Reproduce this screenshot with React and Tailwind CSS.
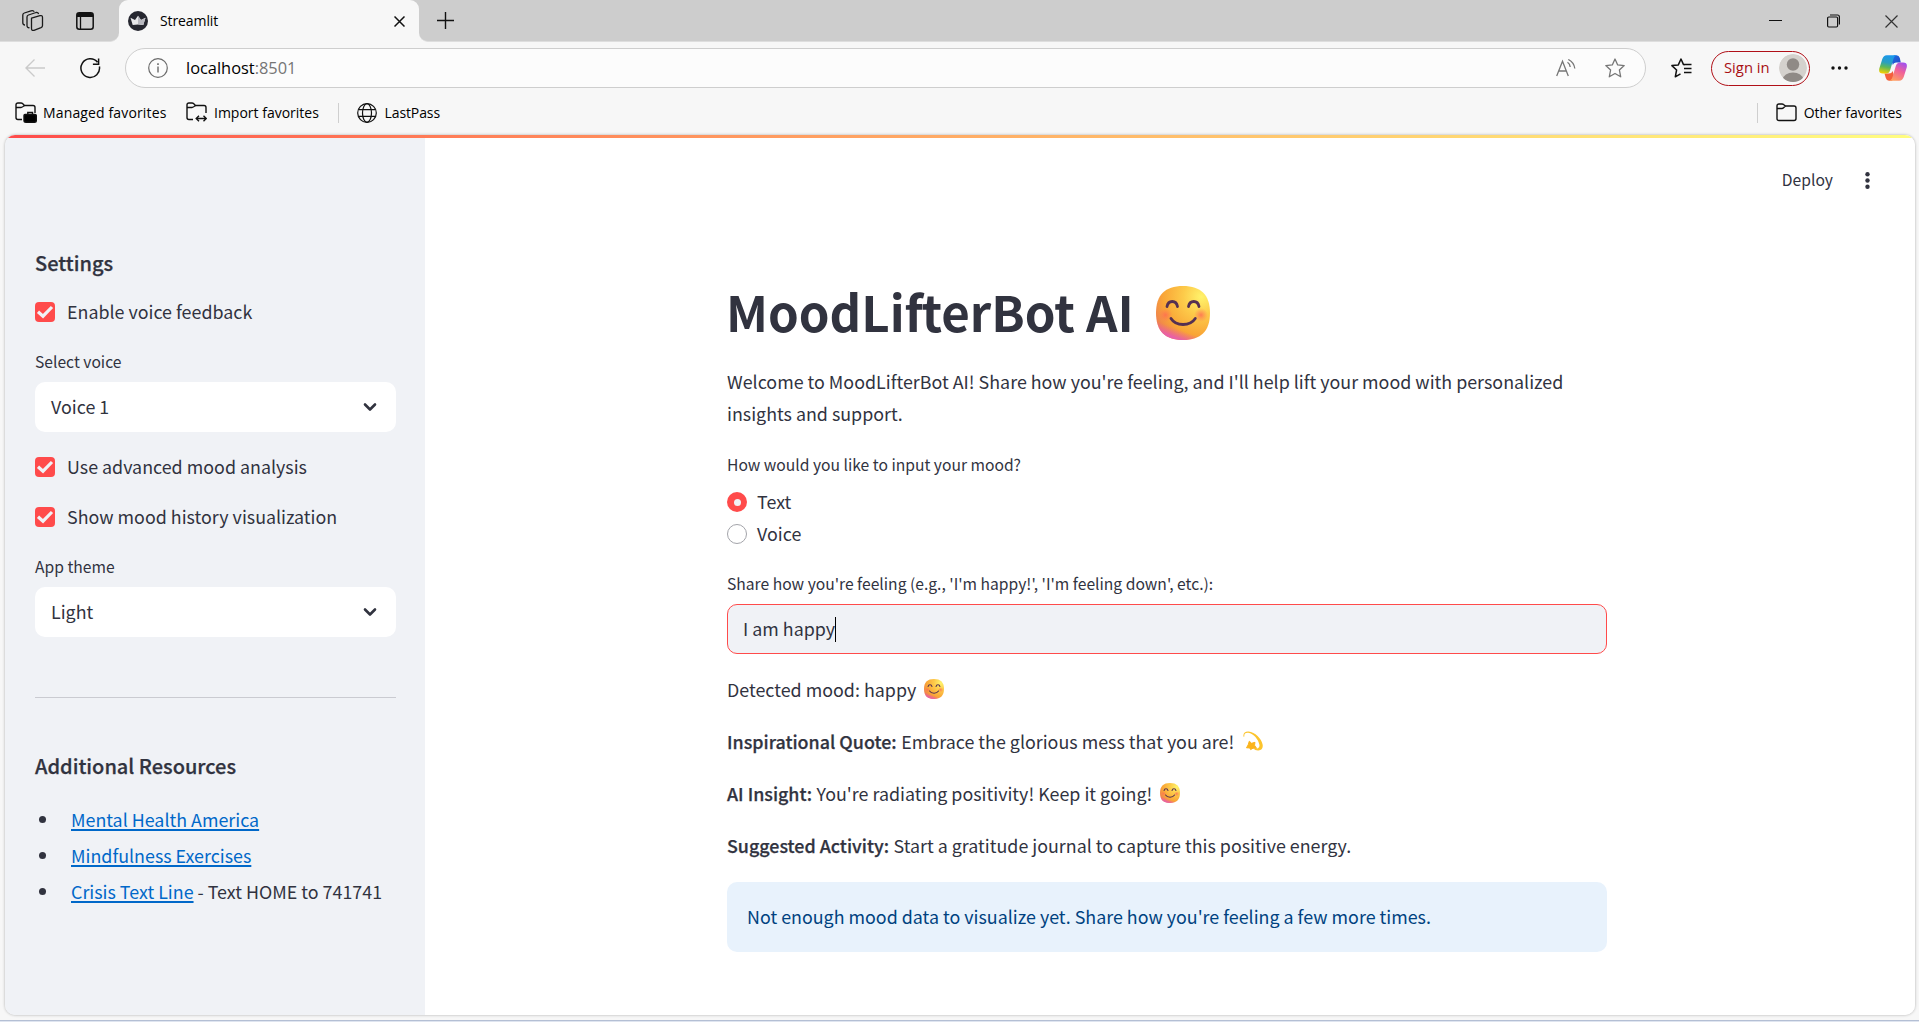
const SANS = "font-['Noto_Sans_CJK_SC','Noto_Sans',sans-serif]";

function Smile({ size, id, className = "" }) {
  return (
    <svg width={size} height={size} viewBox="0 0 54 54" className={className}>
      <defs>
        <radialGradient id={id + "a"} cx="0.84" cy="0.2" r="0.95">
          <stop offset="0" stopColor="#fff36c" />
          <stop offset="0.35" stopColor="#fdcb4a" />
          <stop offset="0.75" stopColor="#f9a536" />
          <stop offset="1" stopColor="#ee8050" />
        </radialGradient>
        <linearGradient id={id + "b"} x1="0.52" y1="0.84" x2="0.46" y2="1">
          <stop offset="0" stopColor="#f0609a" stopOpacity="0" />
          <stop offset="1" stopColor="#e860a8" />
        </linearGradient>
        <radialGradient id={id + "c"}>
          <stop offset="0" stopColor="#ff6a55" stopOpacity="0.8" />
          <stop offset="1" stopColor="#ff7a55" stopOpacity="0" />
        </radialGradient>
      </defs>
      <path d="M27 0C45 0 54 9 54 27S45 54 27 54 0 45 0 27 9 0 27 0Z" fill={`url(#${id}a)`} />
      <path d="M27 0C45 0 54 9 54 27S45 54 27 54 0 45 0 27 9 0 27 0Z" fill={`url(#${id}b)`} />
      <circle cx="9.5" cy="29" r="7" fill={`url(#${id}c)`} />
      <circle cx="45" cy="29" r="7" fill={`url(#${id}c)`} />
      <g fill="none" stroke="#553052" strokeWidth="2.8" strokeLinecap="round">
        <path d="M11 20.5C12.2 13.8 20.3 13.8 21.5 20.5" />
        <path d="M32.5 20.5C33.7 13.8 41.8 13.8 43 20.5" />
        <path d="M15 32.5C20 40.5 34 40.5 39.3 32.5" />
      </g>
    </svg>
  );
}

function Dizzy({ className = "" }) {
  return (
    <svg width="20" height="20" viewBox="0 0 20 20" className={className}>
      <path d="M.6 5.800C-.3 2.500 2 .3 5.500 .5C12 1 18.500 7.500 19.600 13.500C20.300 17.500 18.500 19.600 15 19.400C12.500 19.300 11 18.700 11.500 18C14.500 18.200 16.700 17 16.500 14C15.500 8.500 10.500 2.600 5.300 1.800C2.500 1.400 1 2.800 1.300 5.700Z" fill="#fcc42c" />
      <path d="M6.300 10.200L8.600 12.300L12 11.300L11.500 14.200L13.600 17.400L10 17.200L7.600 18.600L6.700 16.900L3.500 16.800L5.200 13.800Z" fill="#fbb41c" stroke="#fbb41c" strokeLinejoin="round" />
    </svg>
  );
}

function Check({ children }) {
  return (
    <label className="flex h-8 items-center gap-3 text-[17.880px] leading-8">
      <span className="flex size-5 items-center justify-center rounded-[4px] bg-[#ff4b4b]">
        <svg width="18" height="14" viewBox="0 0 18 14" fill="none" stroke="#f0f2f6" strokeWidth="3.200">
          <path d="M2 6.700L7 11.200L16 2" />
        </svg>
      </span>
      <span className="mb-0.5 whitespace-nowrap">{children}</span>
    </label>
  );
}

function Select({ label, value, className = "" }) {
  return (
    <div className={className}>
      <div className="h-[33px] text-[15.650px] leading-[26px]">{label}</div>
      <div className="flex h-[50px] items-center justify-between rounded-[10px] bg-white pr-[19px] pl-4 text-[17.880px]">
        <span className="mb-0.5">{value}</span>
        <svg width="14" height="10" viewBox="0 0 14 10" fill="none" stroke="#31333f" strokeWidth="2.600" strokeLinecap="round" strokeLinejoin="round">
          <path d="M2 2.500L7 7.500L12 2.500" />
        </svg>
      </div>
    </div>
  );
}

function TabStrip() {
  return (
    <div className="flex h-[42px] bg-[#cdcdcd]">
      <div className="flex flex-1 bg-[#f7f7f7]">
        <div className="flex w-[119px] items-center rounded-br-[9px] border-b border-[#dedede] bg-[#cdcdcd] pl-[22px]">
          <svg width="22" height="22" viewBox="0 0 22 22" fill="none" stroke="#1b1b1b" strokeWidth="1.300" strokeLinejoin="round">
            <path d="M9.500 8.200L18 5.700Q20.500 5 20.500 7.500V15.500Q20.500 17 19 17.700L12 20.300Q9.500 21 9.500 18.500V8.200Z" />
            <path d="M7.500 17.700Q5 18 5 15.500V7Q5 5.500 6.500 5L14 2.500Q16 2 16.600 4" />
            <path d="M3 15Q.8 15 .8 12.500V5Q.8 3.600 2.300 3L9 .9Q11.500 .2 12.200 1.800" />
          </svg>
          <svg width="18" height="18" viewBox="0 0 18 18" className="ml-[32px]">
            <rect x=".8" y=".8" width="16.400" height="16.400" rx="2.500" fill="none" stroke="#111" strokeWidth="1.500" />
            <path d="M1 5V3Q1 1 3 1H15Q17 1 17 3V5Z" fill="#111" />
            <path d="M4.500 5V17" stroke="#111" strokeWidth="1.300" />
          </svg>
        </div>
        <div className="w-[300px] bg-[#cdcdcd]">
          <div className="flex h-full items-center rounded-t-[9px] bg-[#f7f7f7] pl-[9px]">
            <svg width="20" height="20" viewBox="0 0 20 20">
              <circle cx="10" cy="10" r="10" fill="#262730" />
              <path d="M2.500 6.800L7 9L10 4.800L13 9L17.500 6.800L15.300 14Q10 13 4.700 14Z" fill="#e8e8ea" />
              <path d="M10 4.800L13 9L17.500 6.800L15.300 14Q12 13.200 10 13.300Z" fill="#b9b9c0" />
            </svg>
            <span className="mb-0.5 ml-3 text-[14px] tracking-[-0.1px]">Streamlit</span>
            <svg width="11" height="11" viewBox="0 0 11 11" className="mt-px mr-[14px] ml-auto" stroke="#111" strokeWidth="1.500">
              <path d="M.5 .5L10.500 10.500M10.500 .5L.5 10.500" />
            </svg>
          </div>
        </div>
        <div className="flex flex-1 items-center rounded-bl-[9px] border-b border-[#dedede] bg-[#cdcdcd] pl-[18px]">
          <svg width="17" height="17" viewBox="0 0 17 17" stroke="#111" strokeWidth="1.400">
            <path d="M8.500 0V17M0 8.500H17" />
          </svg>
          <svg width="13" height="1" viewBox="0 0 13 1" className="ml-auto"><path d="M0 .5H13" stroke="#111" strokeWidth="1" /></svg>
          <svg width="13" height="14" viewBox="0 0 13 14" className="ml-[45px]" fill="none" stroke="#111" strokeWidth="1.200">
            <rect x=".6" y="3" width="10" height="10" rx="1.200" />
            <path d="M3 1H10.500Q12.400 1 12.400 3V10.500" />
          </svg>
          <svg width="13" height="13" viewBox="0 0 13 13" className="mt-px mr-[21px] ml-[45px]" stroke="#333" strokeWidth="1.200">
            <path d="M.5 .5L12.500 12.500M12.500 .5L.5 12.500" />
          </svg>
        </div>
      </div>
    </div>
  );
}

function Copilot() {
  return (
    <svg width="28" height="26" viewBox="0 0 28 26">
      <defs>
        <linearGradient id="cpA" x1="0.5" y1="0" x2="0.3" y2="1">
          <stop offset="0" stopColor="#1a98ee" />
          <stop offset="0.4" stopColor="#2a9fc0" />
          <stop offset="0.65" stopColor="#5cb85a" />
          <stop offset="1" stopColor="#f5d000" />
        </linearGradient>
        <linearGradient id="cpB" x1="0.8" y1="0" x2="0.3" y2="1">
          <stop offset="0" stopColor="#a050f0" />
          <stop offset="0.45" stopColor="#f0609a" />
          <stop offset="1" stopColor="#ffa060" />
        </linearGradient>
        <linearGradient id="cpC" x1="0" y1="0" x2="1" y2="1">
          <stop offset="0" stopColor="#1a70e0" />
          <stop offset="1" stopColor="#2848c8" />
        </linearGradient>
      </defs>
      <path d="M15 .2H17.500Q20 .2 20.800 3L21.800 7.500H17Q14.500 7.500 13.800 10L12 4Z" fill="url(#cpC)" />
      <path d="M13 25.700H10Q7.500 25.700 6.800 23L5.500 18.500H10Q12.800 18.500 13.600 16L15.500 22Z" fill="#f4603c" />
      <path d="M7.800 .2H18Q15.500 .5 14.500 3.800L11.200 15Q10.200 18.500 7 18.500H4Q-.8 18.500 .3 13.500L3.300 4Q4.500 .2 7.800 .2Z" fill="url(#cpA)" />
      <path d="M20.200 25.700H10Q12.500 25.400 13.500 22L16.800 11Q17.800 7.500 21 7.500H24Q28.800 7.500 27.700 12.500L24.700 22Q23.500 25.700 20.200 25.700Z" fill="url(#cpB)" />
    </svg>
  );
}

function AddressRow() {
  return (
    <div className="flex h-[52px] items-center">
      <svg width="20" height="18" viewBox="0 0 20 18" className="ml-[25px]" fill="none" stroke="#cacaca" strokeWidth="1.400">
        <path d="M20 9H1M9.500 .6L1 9L9.500 17.400" />
      </svg>
      <svg width="21" height="21" viewBox="0 0 21 21" className="ml-[35px]" fill="none" stroke="#111" strokeWidth="1.500">
        <path d="M19.400 8.500A9.300 9.300 0 1 1 17.500 4.300M18.600 .5V6.200H12.900" />
      </svg>
      <div className="ml-[24px] flex h-10 w-[1521px] items-center rounded-full border border-[#cecece] bg-[#fcfcfc] pr-[20px] pl-[22px]">
        <svg width="20" height="20" viewBox="0 0 20 20" fill="none" stroke="#6b6b6b" strokeWidth="1.200">
          <circle cx="10" cy="10" r="9.300" />
          <path d="M10 8.500V14.500" strokeWidth="1.400" /><path d="M10 5.300V7" strokeWidth="1.600" />
        </svg>
        <span className="ml-[18px] text-[16.400px] leading-[38px] text-black">localhost<span className="text-[#757575]">:8501</span></span>
        <svg width="20" height="18" viewBox="0 0 20 18" className="ml-auto" fill="none" stroke="#767676" strokeWidth="1.300">
          <path d="M.7 17L6.500 2.300L12.300 17M2.800 12H10.200" />
          <path d="M11.500 3.200Q14 4.800 14.200 8M12.300 .5Q18 3.300 18.800 9.500" />
        </svg>
        <svg width="20" height="20" viewBox="0 0 20 20" className="ml-[29px]" fill="none" stroke="#767676" strokeWidth="1.300" strokeLinejoin="round">
          <path d="M10 1L12.700 6.900L19.200 7.600L14.400 12L15.700 18.800L10 15.500L4.300 18.800L5.600 12L.8 7.600L7.300 6.900Z" />
        </svg>
      </div>
      <svg width="21" height="20" viewBox="0 0 21 20" className="ml-[25px]" fill="none" stroke="#111" strokeWidth="1.500" strokeLinejoin="round">
        <path d="M13.500 6.700L12.500 6.600L10 1L7.300 6.900L.9 7.600L5.600 12L4.300 18.800L9.500 15.800" />
        <path d="M13 6.500H20.500M13 10.500H20.500M13 14.500H20.500" />
      </svg>
      <div className="ml-[19px] flex h-[35px] w-[99px] items-center rounded-full border-[1.500px] border-[#b01018] pl-[12px]">
        <span className="mb-px w-[55px] text-[14.800px] whitespace-nowrap text-[#a80f14]">Sign in</span>
        <svg width="28" height="28" viewBox="0 0 28 28">
          <defs><clipPath id="av"><circle cx="14" cy="14" r="14" /></clipPath></defs>
          <g clipPath="url(#av)">
            <circle cx="14" cy="14" r="14" fill="#d4d1cd" />
            <circle cx="14" cy="10.500" r="6.200" fill="#8f8a86" />
            <ellipse cx="14" cy="25" rx="10" ry="6.500" fill="#8f8a86" />
          </g>
        </svg>
      </div>
      <svg width="17" height="4" viewBox="0 0 17 4" className="ml-[21px]" fill="#111">
        <circle cx="2" cy="2" r="1.700" /><circle cx="8.500" cy="2" r="1.700" /><circle cx="15" cy="2" r="1.700" />
      </svg>
      <div className="ml-[31px]"><Copilot /></div>
    </div>
  );
}

const FOLDER = "M20 11V5.500Q20 3.500 18 3.500H9.500L7.500 1.500Q7 1 6 1H3Q1 1 1 3V15.500Q1 17.500 3 17.500H7";

function Bookmarks() {
  return (
    <div className="flex h-[41px] items-center pb-1 text-[14px]">
      <svg width="22" height="21" viewBox="0 0 22 21" className="ml-[15px]" fill="none" stroke="#111" strokeWidth="1.400">
        <path d={FOLDER} /><path d="M1 5.500H6Q7 5.500 9.500 3.500" />
        <path d="M10 12.500Q9 12.500 9 13.500V18.500Q9 20.300 11 20.300H19.500Q21.300 20.300 21.300 18.500V13.500Q21.300 12.500 20 12.500Z" fill="#000" />
        <path d="M12.800 12.500V10.500H17.500V12.500" />
      </svg>
      <span className="ml-[6px] w-[123px] tracking-[0.140px] whitespace-nowrap">Managed favorites</span>
      <svg width="21" height="21" viewBox="0 0 21 21" className="ml-[20px]" fill="none" stroke="#111" strokeWidth="1.400">
        <path d={FOLDER} /><path d="M1 5.500H6Q7 5.500 9.500 3.500" />
        <path d="M10.500 16.500H20M13 13.700L10.200 16.500L13 19.300M17.500 13.700L20.300 16.500L17.500 19.300" />
      </svg>
      <span className="ml-[7px] w-[106px] whitespace-nowrap">Import favorites</span>
      <span className="ml-[18px] h-5 w-px bg-[#cfcfcf]" />
      <svg width="20" height="20" viewBox="0 0 20 20" className="ml-[18px]" fill="none" stroke="#111" strokeWidth="1.200">
        <circle cx="10" cy="10" r="9.300" /><ellipse cx="10" cy="10" rx="4.500" ry="9.300" /><path d="M1.500 6.700H18.500M1.500 13.300H18.500" />
      </svg>
      <span className="ml-[7.500px] tracking-[-0.1px]">LastPass</span>
      <span className="ml-auto h-5 w-px bg-[#cfcfcf]" />
      <svg width="21" height="19" viewBox="0 0 21 19" className="ml-[18px]" fill="none" stroke="#111" strokeWidth="1.400">
        <path d="M1 3Q1 1 3 1H6Q7 1 7.500 1.500L9.500 3H18Q20 3 20 5V15.500Q20 17.500 18 17.500H3Q1 17.500 1 15.500ZM1 5.500H6Q7 5.500 9.500 3" />
      </svg>
      <span className="mr-[17px] ml-[7px] whitespace-nowrap">Other favorites</span>
    </div>
  );
}

function Sidebar() {
  const link = "text-[#0068c9] underline decoration-[1.500px] underline-offset-[2px]";
  const heading = "h-[30px] text-[20px] leading-[30px] font-medium [-webkit-text-stroke:0.25px]";
  return (
    <aside className="w-[420px] bg-[#f0f2f6] pt-[113px] pr-[29px] pl-[30px]">
      <h3 className={heading}>Settings</h3>
      <div className="mt-[18px]"><Check>Enable voice feedback</Check></div>
      <Select className="mt-[21px]" label="Select voice" value="Voice 1" />
      <div className="mt-[19px] flex flex-col gap-[18px]">
        <Check>Use advanced mood analysis</Check>
        <Check>Show mood history visualization</Check>
      </div>
      <Select className="mt-[21px]" label="App theme" value="Light" />
      <hr className="mt-[60px] h-px border-0 border-t border-[#cacbd1]" />
      <h3 className={"mt-[53px] " + heading}>Additional Resources</h3>
      <ul className="mt-[20px] text-[17.880px] leading-9">
        {["Mental Health America", "Mindfulness Exercises", "Crisis Text Line"].map((t, i) => (
          <li key={t} className="flex items-center whitespace-nowrap">
            <span className="mr-[25px] ml-1 size-[7px] rounded-full bg-[#31333f]" />
            <span><a className={link}>{t}</a>{i === 2 && " - Text HOME to 741741"}</span>
          </li>
        ))}
      </ul>
    </aside>
  );
}

function Strong({ children }) {
  return <strong className="mr-[4.500px] font-medium [-webkit-text-stroke:0.25px]">{children}</strong>;
}

function Main() {
  return (
    <main className="relative flex-1 bg-white">
      <div className="absolute top-[30px] right-[45px] flex h-[30px] items-center text-[15.650px]">
        <span>Deploy</span>
        <svg width="5" height="17" viewBox="0 0 5 17" className="ml-[32px]" fill="#31333f">
          <circle cx="2.500" cy="2.300" r="2.200" /><circle cx="2.500" cy="8.500" r="2.200" /><circle cx="2.500" cy="14.700" r="2.200" />
        </svg>
      </div>
      <div className="ml-[302px] w-[880px] pt-[143px] text-[17.880px] leading-8">
        <h1 className="flex h-[66px] items-center text-[49.200px] leading-[66px] font-bold whitespace-nowrap">
          <span className="-ml-px w-[430px]">MoodLi<span className="tracking-[-1.500px]">f</span>terBot AI</span>
          <Smile size={54} id="s1" className="mt-[3px]" />
        </h1>
        <p className="mt-[21px] whitespace-nowrap">Welcome to MoodLifterBot AI! Share how you're feeling, and I'll help lift your mood with personalized<br />insights and support.</p>
        <div className="mt-[23px] h-[26px] text-[15.650px] leading-[26px]">How would you like to input your mood?</div>
        <div className="mt-[8px]">
          <label className="flex h-8 items-center gap-[10px]">
            <span className="flex size-5 items-center justify-center rounded-full bg-[#ff4b4b]"><span className="size-[7px] rounded-full bg-[#f0f2f6]" /></span><span className="mb-0.5">Text</span>
          </label>
          <label className="flex h-8 items-center gap-[10px]">
            <span className="size-5 rounded-full border border-[#a3a4aa] bg-white" /><span className="mb-0.5">Voice</span>
          </label>
        </div>
        <div className="mt-[21px] h-[33px] text-[15.650px] leading-[26px]">Share how you're feeling (e.g., 'I'm happy!', 'I'm feeling down', etc.):</div>
        <div className="flex h-[50px] items-center rounded-[10px] border border-[#ff4b4b] bg-[#f0f2f6] pl-[15px]">
          <span className="mb-0.5">I am happy</span><span className="h-[25px] w-px bg-black" />
        </div>
        <div className="mt-[19px] flex flex-col gap-5 whitespace-nowrap">
          <p className="flex items-center">Detected mood: happy<Smile size={20} id="s2" className="ml-[8px]" /></p>
          <p className="flex items-center"><Strong>Inspirational Quote:</Strong>Embrace the glorious mess that you are!<Dizzy className="ml-[9px]" /></p>
          <p className="flex items-center"><Strong>AI Insight:</Strong>You're radiating positivity! Keep it going!<Smile size={20} id="s3" className="ml-[8px]" /></p>
          <p className="flex items-center"><Strong>Suggested Activity:</Strong>Start a gratitude journal to capture this positive energy.</p>
        </div>
        <div className="mt-[21px] flex h-[70px] items-center rounded-[10px] bg-[#e8f2fc] pl-5 text-[#004280]"><span className="mb-0.5">Not enough mood data to visualize yet. Share how you're feeling a few more times.</span></div>
      </div>
    </main>
  );
}

export default function App() {
  return (
    <div className="flex h-[1022px] w-[1919px] flex-col overflow-hidden bg-[#f7f7f7] font-['Open_Sans','Noto_Sans',sans-serif] text-black">
      <TabStrip />
      <AddressRow />
      <Bookmarks />
      <div className={"relative mr-1 ml-[5px] flex h-[880px] overflow-hidden rounded-[10px] text-[#31333f] shadow-[0_0_3px_rgba(0,0,0,0.3)] " + SANS}>
        <Sidebar />
        <Main />
        <div className="absolute inset-x-0 top-0 h-[3px] bg-linear-to-r from-[#ff4b4b] to-[#fffd80]" />
      </div>
      <div className="mt-[5px] h-[2px] border-t border-[#b4bfd4] bg-[#dfe5f0]" />
    </div>
  );
}
